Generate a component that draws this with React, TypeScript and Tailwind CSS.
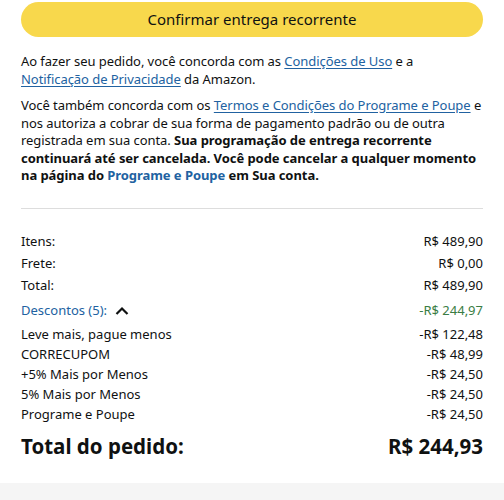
import React from 'react';

const font = { fontFamily: '"Noto Sans", "Liberation Sans", sans-serif' };

const summary = [
  { label: 'Itens:', value: 'R$ 489,90' },
  { label: 'Frete:', value: 'R$ 0,00' },
  { label: 'Total:', value: 'R$ 489,90' },
];

const discounts = [
  { label: 'Leve mais, pague menos', value: '-R$ 122,48' },
  { label: 'CORRECUPOM', value: '-R$ 48,99' },
  { label: '+5% Mais por Menos', value: '-R$ 24,50' },
  { label: '5% Mais por Menos', value: '-R$ 24,50' },
  { label: 'Programe e Poupe', value: '-R$ 24,50' },
];

const Link = ({ children }: { children: React.ReactNode }) => (
  <a href="#" className="text-[#2162a1] underline underline-offset-2">{children}</a>
);

export default function App() {
  return (
    <div className="bg-white text-[#0f1111] w-[504px] h-[500px] overflow-hidden flex flex-col" style={font}>
      <div className="px-[21px] pt-[2px] flex-1">
        <button className="w-full h-[35px] rounded-full bg-[#f8d84c] text-[15px] text-[#0f1111]">
          Confirmar entrega recorrente
        </button>

        <p className="mt-[16px] text-[13px] leading-[17.5px] tracking-[-0.06px]">
          Ao fazer seu pedido, você concorda com as <Link>Condições de Uso</Link> e a{' '}
          <Link>Notificação de Privacidade</Link> da Amazon.
        </p>

        <p className="mt-[9px] text-[13px] leading-[17.6px] tracking-[-0.06px]">
          Você também concorda com os <Link>Termos e Condições do Programe e Poupe</Link> e nos autoriza a
          cobrar de sua forma de pagamento padrão ou de outra registrada em sua conta.{' '}
          <b>
            Sua programação de entrega recorrente continuará até ser cancelada. Você pode cancelar a qualquer
            momento na página do <span className="text-[#2162a1]">Programe e Poupe</span> em Sua conta.
          </b>
        </p>

        <div className="mt-[23px] border-t border-[#dddddd]" />

        <div className="mt-[22px] flex flex-col text-[13px]">
          {summary.map((r) => (
            <div key={r.label} className="flex justify-between h-[22px] items-center">
              <span>{r.label}</span>
              <span>{r.value}</span>
            </div>
          ))}
          <div className="flex justify-between h-[28px] items-center">
            <span className="flex items-center gap-[8px] text-[#2162a1]">
              Descontos (5):
              <svg width="14" height="10" viewBox="0 0 14 10" fill="none">
                <path d="M1.5 8 L7 2.5 L12.5 8" stroke="#0f1111" strokeWidth="2.2" />
              </svg>
            </span>
            <span className="text-[#3a7d44]">-R$ 244,97</span>
          </div>
          {discounts.map((r) => (
            <div key={r.label} className="flex justify-between h-[20px] items-center">
              <span>{r.label}</span>
              <span>{r.value}</span>
            </div>
          ))}
          <div className="flex justify-between items-center h-[42px] text-[20.5px] font-bold">
            <span>Total do pedido:</span>
            <span>R$ 244,93</span>
          </div>
        </div>
      </div>
      <div className="h-[17px] bg-[#f5f5f5]" />
    </div>
  );
}
